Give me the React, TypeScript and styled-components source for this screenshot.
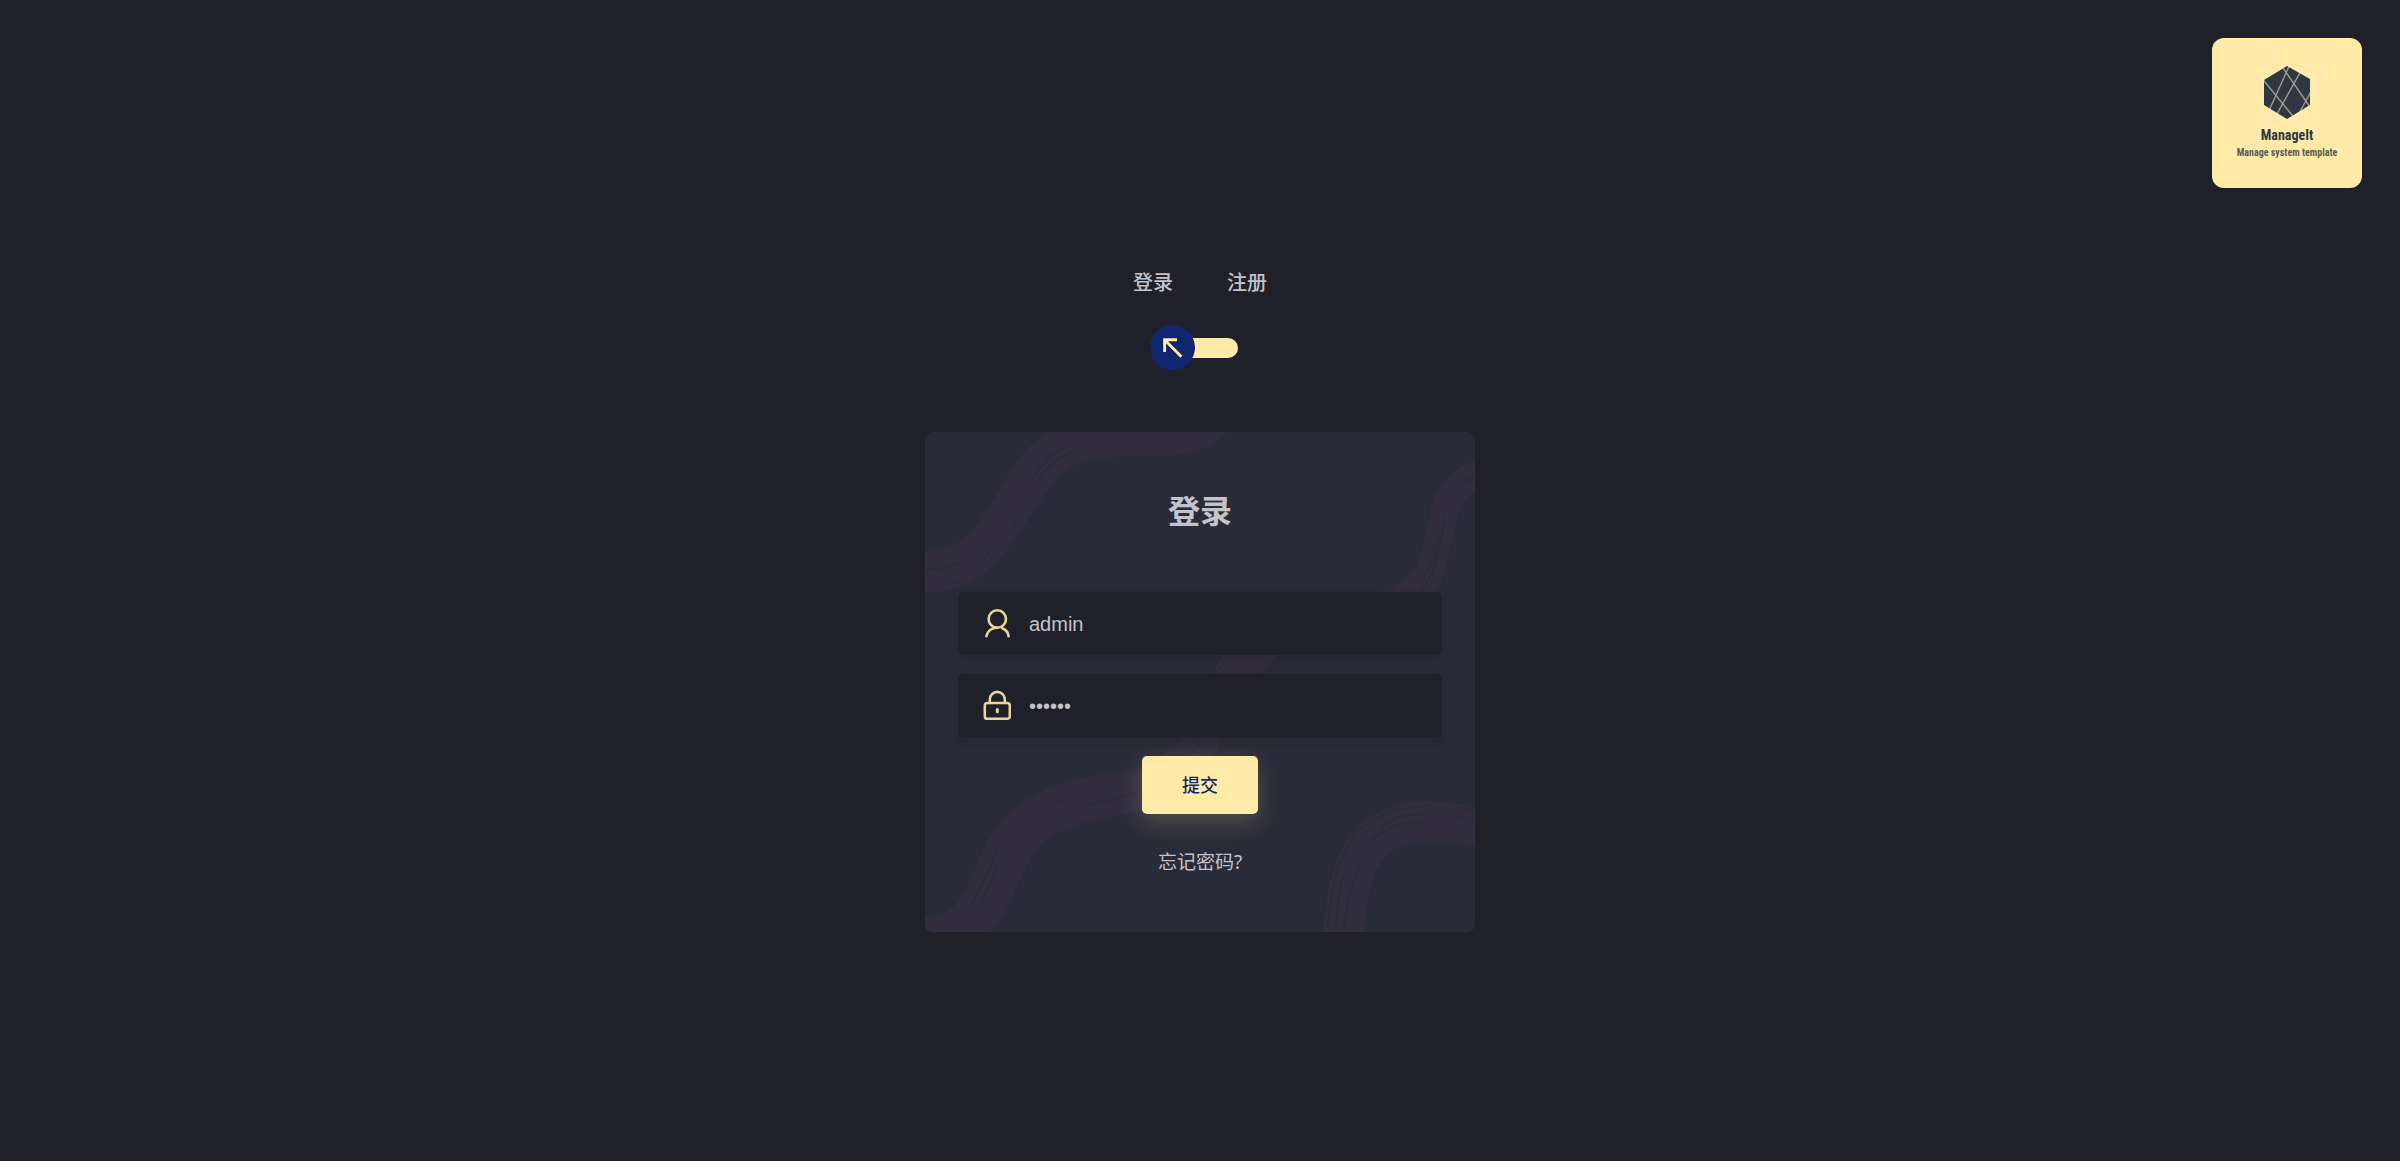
import React, { useState } from "react";
import styled, { createGlobalStyle } from "styled-components";

const color = {
  page: "#1f2029",
  card: "#2a2b38",
  wave: "#312d3e",
  text: "#c4c3ca",
  accent: "#ffeba7",
  navy: "#102770",
  logo: "#2f3742",
};

const GlobalStyle = createGlobalStyle`
  *, *::before, *::after { box-sizing: border-box; }
  body {
    margin: 0;
    background: #fff;
    font-family: "Noto Sans", "Noto Sans CJK SC", sans-serif;
    color: ${color.text};
  }
`;

const Frame = styled.div`
  padding: 0 8px 4px 0;
`;

const Page = styled.main`
  position: relative;
  min-height: calc(100vh - 4px);
  padding: 268px 24px 80px;
  display: flex;
  flex-direction: column;
  align-items: center;
  background: ${color.page};
`;

const Logo = styled.div`
  position: absolute;
  top: 38px;
  right: 38px;
  width: 150px;
  height: 150px;
  display: flex;
  flex-direction: column;
  align-items: center;
  border-radius: 12px;
  background: ${color.accent};
  color: ${color.logo};
  font-family: "Liberation Sans Narrow", "Roboto Condensed", Roboto, sans-serif;
  font-weight: 700;
  text-align: center;
  white-space: nowrap;
`;

const LogoMark = styled.svg`
  flex: none;
  width: 150px;
  height: 88px;
  overflow: visible;
`;

const LogoName = styled.div`
  font-size: 14px;
  line-height: 18px;
`;

const LogoTagline = styled.div`
  font-size: 10px;
  line-height: 18px;
  opacity: 0.8;
`;

const Tabs = styled.div`
  display: flex;
  gap: 54px;
  font-size: 20px;
  line-height: 30px;
  font-weight: 500;
`;

const Switch = styled.label`
  position: relative;
  display: flex;
  align-items: center;
  width: 75px;
  height: 45px;
  margin: 27px 0 62px;
  cursor: pointer;
`;

const SwitchInput = styled.input`
  appearance: none;
  width: 100%;
  height: 20px;
  margin: 0;
  border-radius: 10px;
  background: ${color.accent};
  cursor: pointer;
`;

const Knob = styled.span<{ $right: boolean }>`
  position: absolute;
  top: 0;
  left: ${(p) => (p.$right ? "43px" : "-13px")};
  width: 45px;
  height: 45px;
  border-radius: 50%;
  background: ${color.navy};
  transform: rotate(${(p) => (p.$right ? "180deg" : "0deg")});
  transition: left 0.4s, transform 0.4s;
  pointer-events: none;

  svg { display: block; }
`;

const Card = styled.form`
  position: relative;
  width: 100%;
  max-width: 550px;
  padding: 59px 33px 55px;
  display: flex;
  flex-direction: column;
  align-items: center;
  border-radius: 8px;
  background: ${color.card};
  overflow: hidden;
`;

const Waves = styled.svg`
  position: absolute;
  inset: 0;
  width: 100%;
  height: 100%;
`;

const Title = styled.h1`
  position: relative;
  margin: 0 0 61px;
  font-size: 32px;
  line-height: 40px;
  font-weight: 700;
`;

const Fields = styled.div`
  position: relative;
  width: 100%;
  display: flex;
  flex-direction: column;
  gap: 19px;
`;

const Field = styled.label`
  display: flex;
  align-items: center;
  gap: 18px;
  height: 63px;
  padding: 0 25px;
  border-radius: 5px;
  background: ${color.page};
  box-shadow: 0 4px 8px rgba(21, 21, 21, 0.2);

  svg { flex: none; }
`;

const TextInput = styled.input`
  flex: 1;
  min-width: 0;
  padding: 0;
  border: 0;
  outline: 0;
  background: transparent;
  color: ${color.text};
  font: 500 20px/24px "Liberation Sans", "Noto Sans CJK SC", sans-serif;
`;

const Submit = styled.button`
  position: relative;
  height: 58px;
  margin-top: 19px;
  padding: 0 40px 2px;
  border: 0;
  border-radius: 5px;
  background: ${color.accent};
  box-shadow: 0 8px 24px rgba(255, 235, 167, 0.2);
  color: ${color.navy};
  font: 500 18px/24px "Noto Sans CJK SC", sans-serif;
  cursor: pointer;
`;

const ForgotLink = styled.a`
  position: relative;
  margin-top: 33px;
  color: ${color.text};
  font-size: 19px;
  line-height: 30px;
  text-decoration: none;
`;

const UserIcon = () => (
  <svg width="28" height="32" viewBox="0 0 28 32" fill="none" stroke={color.accent} strokeWidth="2.6" strokeLinecap="round" opacity=".9" aria-hidden="true">
    <circle cx="14.3" cy="11" r="8.7" />
    <path d="M3.3 28.3C4.2 23.5 8.3 19.8 14.3 19.6M19.3 20.2C22.8 21.6 25.2 24.6 25.6 28.3" />
  </svg>
);

const LockIcon = () => (
  <svg width="28" height="32" viewBox="0 0 28 32" fill="none" stroke={color.accent} strokeWidth="2.6" strokeLinecap="round" opacity=".9" aria-hidden="true">
    <rect x="1.8" y="13" width="25" height="15.8" rx="2.6" />
    <path d="M6.8 13V9.4a7.5 7.5 0 0 1 15 0V13" />
    <path d="M14.3 19.6v2.2" strokeWidth="3" />
  </svg>
);

const CardWaves = () => (
  <Waves viewBox="0 0 550 499" preserveAspectRatio="none" aria-hidden="true">
    <g fill={color.wave}>
      <path d="M0 119C20 119 34 112 48 97C60 84 67 70 75 57C88 34 98 14 125 0H303C293 9 284 15 270 19C258 23 248 24 235 24C215 24 203 24 185 25C170 26 158 28 148 34C136 41 128 50 118 64C108 80 99 94 88 109C76 127 66 137 55 144C38 156 22 160 0 160Z" />
      <path d="M550 29C538 32 529 39 522 47C513 57 508 66 505 77C500 94 499 109 495 120C491 132 486 141 478 147C472 152 467 156 455 159C435 168 410 178 385 190L455 205C475 200 500 186 513 159C520 143 523 127 527 110C529 98 531 87 535 77C539 69 543 63 550 59Z" />
      <path d="M0 484C12 484 20 481 28 474C38 464 43 452 48 440C54 426 60 412 68 400C77 385 88 375 102 367C114 359 126 354 138 350C168 341 192 341 217 334C230 328 248 316 258 304C270 288 278 256 288 240L298 222C305 210 315 203 325 200L370 210L355 222C348 228 342 233 337 240C320 264 312 282 298 304C292 316 287 328 280 338C262 362 245 374 217 379C192 383 170 387 152 392C138 397 126 402 118 410C110 418 106 425 102 434C96 446 91 458 85 470C80 481 73 490 64 499H0Z" />
      <path d="M398 499C399 478 402 459 407 444C411 428 417 415 425 404C433 393 441 385 452 380C466 372 481 369 498 369C515 369 534 370 550 374V413C530 410 515 409 498 409C484 409 474 412 465 420C456 428 450 438 447 450C442 466 440 482 439 499Z" />
    </g>
    <g fill="none" stroke={color.card} strokeWidth="1.6" strokeLinecap="round">
      <path d="M110 43C118 31 128 21 140 15M113 49C122 35 136 23 153 18" />
      <path d="M87 94L91 87M59 126L66 118M0 137C14 137 26 135 36 130M30 151L40 149" />
      <path d="M550 45C541 48 536 51 533 57M505 77C501 94 499 109 495 120M510 110C508 125 504 138 498 148M519 85C517 112 512 140 495 159M514 105C512 120 510 128 507 137M494 124C491 134 484 142 478 147M464 159L470 156" />
      <path d="M292 240L299 231M248 317L258 306M265 323L275 309M160 353L166 352M130 371L138 369M94 389L103 382M160 372C180 369 200 363 217 358" />
      <path d="M46 471C56 454 64 439 69 426M56 469C64 454 70 440 74 429M66 430L71 420" />
      <path d="M403 495C405 455 414 424 429 404C444 384 466 374 508 373M410 499C412 480 413 460 418 445M421 482C424 455 431 437 440 424M458 393C469 384 482 381 501 382M446 408C462 393 480 388 503 389M535 374L548 378M534 384C540 385 545 387 550 388M419 499V486" />
    </g>
  </Waves>
);

export default function App() {
  const [register, setRegister] = useState(false);

  return (
    <Frame>
      <GlobalStyle />
      <Page>
        <Logo>
          <LogoMark viewBox="0 0 150 88" aria-hidden="true">
            <path d="M75 28L98 41V67L75 81L52 67V42Z" fill={color.logo} />
            <path
              d="M51 1L111 88M35 22L94 94M79 24L41 108M94 24L56 92M115 24L78 92"
              fill="none"
              stroke="#f5efdc"
              strokeWidth="1.4"
              opacity=".55"
            />
          </LogoMark>
          <LogoName>ManageIt</LogoName>
          <LogoTagline>Manage system template</LogoTagline>
        </Logo>

        <Tabs>
          <span>登录</span>
          <span>注册</span>
        </Tabs>

        <Switch>
          <SwitchInput
            type="checkbox"
            aria-label="注册"
            checked={register}
            onChange={(e) => setRegister(e.target.checked)}
          />
          <Knob $right={register}>
            <svg width="45" height="45" viewBox="0 0 45 45" fill="none" stroke={color.accent} strokeWidth="2.9" aria-hidden="true">
              <path d="M27 14.8H14.6V27M14.6 14.8L31.4 31.8" />
            </svg>
          </Knob>
        </Switch>

        <Card onSubmit={(e) => e.preventDefault()}>
          <CardWaves />
          <Title>{register ? "注册" : "登录"}</Title>
          <Fields>
            <Field>
              <UserIcon />
              <TextInput type="text" aria-label="用户名" defaultValue="admin" autoComplete="username" />
            </Field>
            <Field>
              <LockIcon />
              <TextInput type="password" aria-label="密码" defaultValue="123456" autoComplete="current-password" />
            </Field>
          </Fields>
          <Submit type="submit">提交</Submit>
          <ForgotLink href="#forgot">忘记密码?</ForgotLink>
        </Card>
      </Page>
    </Frame>
  );
}
